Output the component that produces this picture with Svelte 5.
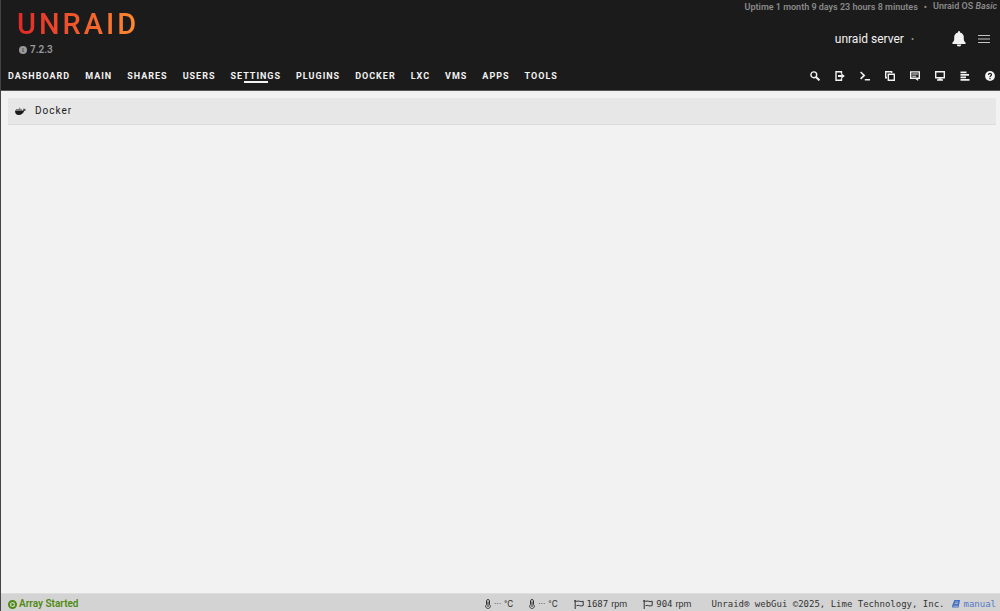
<script>
	const menu = [
		'Dashboard',
		'Main',
		'Shares',
		'Users',
		'Settings',
		'Plugins',
		'Docker',
		'LXC',
		'VMs',
		'Apps',
		'Tools'
	];

	const tools = ['Search', 'Logout', 'Terminal', 'File Manager', 'Feedback', 'Info', 'Log', 'Help'];

	const sensors = [
		{ type: 'temp', value: '···', unit: '°C' },
		{ type: 'temp', value: '···', unit: '°C' },
		{ type: 'fan', value: '1687', unit: 'rpm' },
		{ type: 'fan', value: '904', unit: 'rpm' }
	];

	let active = $state('Settings');
</script>

<div class="page">
	<header>
		<div class="top">
			<div class="brand">
				<a class="logo" href="#home">UNRAID</a>
				<a class="version" href="#version">
					<svg width="8" height="8" viewBox="0 0 16 16" aria-hidden="true">
						<circle cx="8" cy="8" r="8" fill="currentColor" />
						<path d="M7 4h2v2H7zM7 7h2v5H7z" fill="#444" />
					</svg>
					7.2.3
				</a>
			</div>
			<div class="server">
				<div class="uptime">
					<span>Uptime 1 month 9 days 23 hours 8 minutes</span>
					<span>•</span>
					<span class="edition">Unraid OS <em>Basic</em></span>
				</div>
				<div class="account">
					<a class="name" href="#server">unraid server</a>
					<span class="dot">•</span>
					<button class="bell" aria-label="Notifications">
						<svg width="14" height="16" viewBox="0 0 14 16">
							<path
								d="M7 0a1 1 0 0 1 1 1v.4c2.300.5 3.800 2.300 3.800 4.600v2c0 1.500.600 2.600 1.700 3.600.500.600.200 1.400-.600 1.400H1.100c-.8 0-1.100-.8-.6-1.400C1.600 10.600 2.200 9.500 2.200 8V6c0-2.300 1.500-4.100 3.800-4.600V1a1 1 0 0 1 1-1z"
								fill="#f2f2f2"
							/>
							<path d="M4.700 13.500h4.600a2.300 2.100 0 0 1-4.600 0z" fill="#f2f2f2" />
						</svg>
					</button>
					<button aria-label="Menu">
						<svg width="12" height="10" viewBox="0 0 12 10">
							<path d="M0 1.500h12M0 5h12M0 8.500h12" stroke="#c4c4c4" />
						</svg>
					</button>
				</div>
			</div>
		</div>

		<div class="bar">
			<nav>
				{#each menu as item}
					<a href="#{item}" class:active={item === active} onclick={() => (active = item)}>{item}</a>
				{/each}
			</nav>
			<div class="tools">
				{#each tools as tool}
					<button aria-label={tool} title={tool}>
						<svg width="10" height="10" viewBox="0 0 10 10" fill="none" stroke="currentColor" stroke-width="1.4">
							{#if tool === 'Search'}
								<circle cx="3.800" cy="3.800" r="2.900" />
								<path d="M6 6l3.400 3.400" stroke-width="2" />
							{:else if tool === 'Logout'}
								<path d="M6.500 2.800V.7H1v8.600h5.500V7.200" />
								<path d="M3 5h4" stroke-width="2" />
								<path d="M6.300 2.200L9.900 5 6.300 7.800z" fill="currentColor" stroke="none" />
							{:else if tool === 'Terminal'}
								<path d="M.6 1l3.600 3.400L.6 7.800M4.800 8.800H10" stroke-width="1.600" />
							{:else if tool === 'File Manager'}
								<path d="M2 6.700H.7V.7h6v1.200M3.300 3.300h6v6h-6z" />
							{:else if tool === 'Feedback'}
								<path d="M.7.9h8.600v6.400H.7z" stroke-width="1.400" />
								<path d="M2.200 3h5.600M2.200 5.200h4" stroke-width="1" />
								<path d="M4.800 7.500h3.400v2.500z" fill="currentColor" stroke="none" />
							{:else if tool === 'Info'}
								<path d="M.7.7h8.600v6H.7z" />
								<path d="M2 9h6M3.500 8h3" stroke-width="1.500" />
							{:else if tool === 'Log'}
								<path d="M.5 1.300h6M.5 3.800h8.500M.5 6.300h5.500M.5 8.800h9" stroke-width="1.800" />
							{:else}
								<circle cx="5" cy="5" r="4.900" fill="currentColor" stroke="none" />
								<path d="M3.500 3.900C3.500 2 6.500 2 6.500 3.800 6.500 4.800 5 4.800 5 6.200M5 7v1.200" stroke="#1c1b1b" stroke-width="1.200" />
							{/if}
						</svg>
					</button>
				{/each}
			</div>
		</div>
	</header>

	<main>
		<h1 class="title">
			<svg width="11" height="8" viewBox="0 0 22 16" aria-hidden="true">
				<path
					d="M0 7h15.500c.8 0 1.300-.2 1.700-.5-.7-1.300-.5-2.800.3-3.900 1.100.7 1.700 1.600 1.800 2.700 1-.2 2-.1 2.700.4-.6 1.300-1.800 1.900-3.500 1.900C16.800 12.800 13 16 7.500 16 2.500 16 0 13 0 7z"
					fill="#1c1b1b"
				/>
				<path d="M2.300 4.200h2.400v2.300H2.300zM5.200 4.200h2.400v2.300H5.200zM8.100 4.200h2.400v2.300H8.100zM11 4.200h2.400v2.300H11zM8.100 1.500h2.400v2.200H8.100z" fill="#666" />
			</svg>
			Docker
		</h1>
	</main>

	<footer>
		<span class="status">
			<svg width="9" height="9" viewBox="0 0 9 9" aria-hidden="true">
				<circle cx="4.500" cy="4.500" r="3.500" fill="none" stroke="currentColor" stroke-width="2" />
				<path d="M3.500 2.500v4l3-2z" fill="currentColor" />
			</svg>
			Array Started
		</span>
		<div class="sensors">
			{#each sensors as sensor}
				<span class="sensor">
					{#if sensor.type === 'temp'}
						<svg width="6" height="10" viewBox="0 0 6 10" fill="none" stroke="currentColor" aria-hidden="true">
							<path d="M1.500 5.500V1.800c0-1.700 3-1.700 3 0v3.700c2 2-0 4-1.500 4s-3.500-2-1.500-4z" />
							<path d="M3 2.500v5.500" />
						</svg>
						{sensor.value}
					{:else}
						<svg width="10" height="9" viewBox="0 0 10 9" fill="none" stroke="currentColor" aria-hidden="true">
							<path d="M1.200 0v9M2.500 1.500c2.500-1.500 3.500 1 6.700-.3v4.300c-3 1.500-4-1-6.700.2M0 1h2.500" />
						</svg>
						<span class="rpm">{sensor.value}</span>
					{/if}
					<span>{sensor.unit}</span>
				</span>
			{/each}
		</div>
		<div class="copyright">
			<span>Unraid® webGui ©2025, Lime Technology, Inc.</span>
			<a href="#manual">
				<svg width="8" height="8" viewBox="0 0 8 8" aria-hidden="true">
					<path d="M2.300 0H8L6.600 7.500H1C0 7.500-.1 6.500.2 5.600z" fill="#416fc4" />
					<path d="M3 2h3.200M2.600 3.600h3.200M1.200 6.200h5" stroke="#d3d3d3" stroke-width=".7" />
				</svg>
				manual
			</a>
		</div>
	</footer>
</div>

<style>
	:global(body) {
		margin: 0;
		background: #f2f2f2;
	}

	.page {
		display: flex;
		flex-direction: column;
		box-sizing: border-box;
		min-height: 100vh;
		border-left: 1px solid #444;
		font-family: Roboto, sans-serif;
		color: #1c1b1b;
	}

	a {
		color: inherit;
		text-decoration: none;
	}

	button {
		display: flex;
		padding: 0;
		border: 0;
		background: none;
		color: inherit;
		cursor: pointer;
	}

	header {
		background: #1c1b1b;
		color: #f2f2f2;
		border-bottom: 1px solid #555;
	}

	.top {
		display: flex;
		justify-content: space-between;
		height: 62px;
	}

	.brand {
		display: flex;
		flex-direction: column;
		padding: 8px 0 0 16px;
	}

	.logo {
		font-size: 29px;
		font-weight: 500;
		line-height: 32px;
		letter-spacing: 3px;
		background: linear-gradient(90deg, #e22828, #ff8c2f);
		background-clip: text;
		color: transparent;
	}

	.version {
		display: flex;
		align-items: center;
		gap: 3px;
		padding-left: 2px;
		font-size: 10px;
		font-weight: 600;
		line-height: 19px;
		color: #999;
	}

	.uptime {
		display: flex;
		justify-content: flex-end;
		gap: 6px;
		padding-right: 3px;
		font-size: 9px;
		font-weight: 600;
		line-height: 15px;
		color: #8a8a8a;
	}

	.edition {
		line-height: 12px;
	}

	.account {
		display: flex;
		align-items: center;
		justify-content: flex-end;
		padding: 12px 10px 0 0;
		line-height: 24px;
	}

	.name {
		font-size: 12px;
	}

	.dot {
		margin: 0 38px 0 7px;
		font-size: 9px;
		color: #999;
	}

	.bell {
		margin-right: 12px;
	}

	.bar {
		display: flex;
		align-items: center;
		justify-content: space-between;
		height: 28px;
		padding: 0 5px 0 7px;
	}

	nav {
		display: flex;
		gap: 15px;
		font-size: 9px;
		font-weight: 700;
		letter-spacing: 1px;
		line-height: 14px;
		text-transform: uppercase;
	}

	.active {
		background: linear-gradient(#f2f2f2, #f2f2f2) center bottom / 24px 2px no-repeat;
	}

	.tools {
		display: flex;
		gap: 15px;
	}

	main {
		flex: 1;
		padding: 7px 4px 0 7px;
	}

	.title {
		display: flex;
		align-items: center;
		gap: 9px;
		margin: 0;
		padding: 0 7px;
		border-bottom: 1px solid #dcdcdc;
		background: #e7e7e7;
		font-size: 10px;
		font-weight: 400;
		line-height: 26px;
		letter-spacing: 1px;
	}

	footer {
		display: flex;
		align-items: center;
		padding: 3px 4px 0 7px;
		background: #d3d3d3;
		border-top: 1px solid #dedede;
		font-size: 9px;
		line-height: 14px;
		color: #333;
	}

	.status {
		display: flex;
		align-items: center;
		gap: 2px;
		font-size: 10px;
		font-weight: 600;
		color: #4f8a10;
	}

	.sensors {
		display: flex;
		gap: 16px;
		margin-left: auto;
	}

	.sensor {
		display: flex;
		align-items: center;
		gap: 3px;
	}

	.rpm {
		font-family: 'DejaVu Sans Mono', monospace;
	}

	.copyright {
		display: flex;
		gap: 8px;
		margin-left: 20px;
		font-family: 'DejaVu Sans Mono', monospace;
	}

	.copyright a {
		display: flex;
		align-items: center;
		gap: 3px;
		color: #5577c4;
	}
</style>
